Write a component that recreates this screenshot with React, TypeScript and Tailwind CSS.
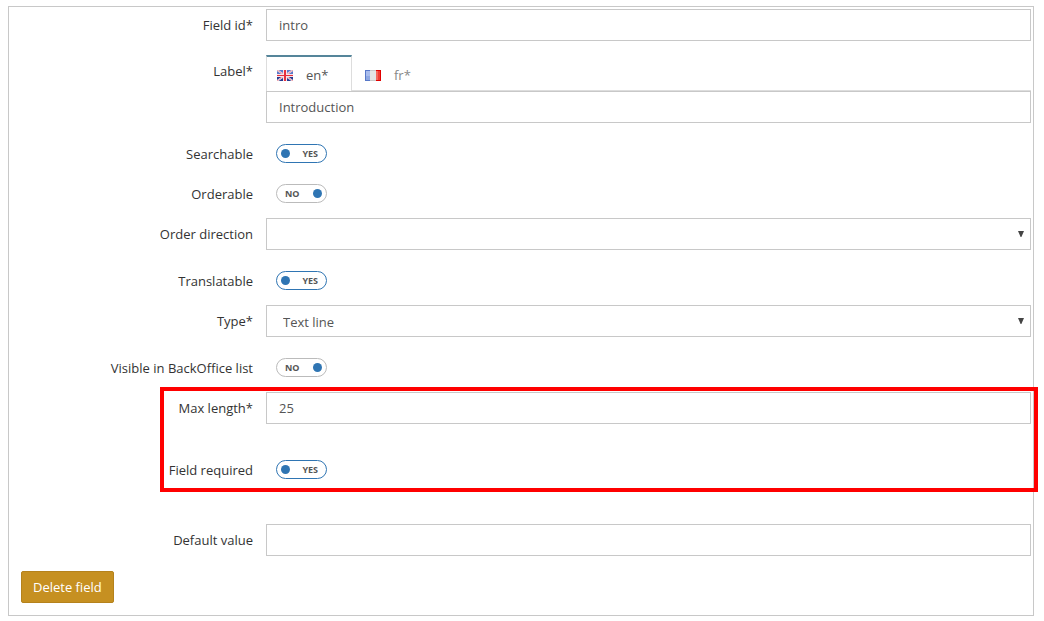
import { useState } from "react";
import type { ReactNode } from "react";

const box =
  "block h-8 w-full rounded-none border border-[#c8c8c8] bg-white px-3 text-[13px] text-[#555] outline-none focus:border-[#2f75b3]";

function Row({ label, id, children }: { label: string; id: string; children: ReactNode }) {
  return (
    <div className="flex items-start">
      <label htmlFor={id} className="w-[244px] shrink-0 text-right leading-8">
        {label}
      </label>
      <div className="ml-[13px] min-w-0 flex-1">{children}</div>
    </div>
  );
}

function TextRow({ label, id, value }: { label: string; id: string; value: string }) {
  return (
    <Row label={label} id={id}>
      <input id={id} type="text" defaultValue={value} className={box} />
    </Row>
  );
}

function SelectRow({ label, id, options }: { label: string; id: string; options: string[] }) {
  return (
    <Row label={label} id={id}>
      <div className="relative">
        <select id={id} className={box + " appearance-none pt-[3px] pl-4"}>
          {options.map((o) => (
            <option key={o}>{o}</option>
          ))}
        </select>
        <svg
          viewBox="0 0 6 6"
          className="pointer-events-none absolute top-[13px] right-[7px] size-[6px]"
          aria-hidden="true"
        >
          <path d="M0 0h6L3.4 6h-.8z" fill="#444" />
        </svg>
      </div>
    </Row>
  );
}

function ToggleRow({ label, id, on }: { label: string; id: string; on: boolean }) {
  const [checked, setChecked] = useState(on);
  const dot = <span className="size-[9px] rounded-full bg-[#2f75b3]" />;
  return (
    <Row label={label} id={id}>
      <div className="flex h-8 items-center pb-px pl-[10px]">
        <label
          className={
            "relative flex h-[19px] w-[51px] cursor-pointer items-center justify-between rounded-full border text-[9px] font-bold text-[#555] " +
            (checked ? "border-[#2f75b3] pr-2 pl-1" : "border-[#bbb] pr-1 pl-2")
          }
        >
          <input
            id={id}
            type="checkbox"
            checked={checked}
            onChange={(e) => setChecked(e.target.checked)}
            className="sr-only"
          />
          {checked ? dot : null}
          <span>{checked ? "YES" : "NO"}</span>
          {checked ? null : dot}
        </label>
      </div>
    </Row>
  );
}

function FlagEn() {
  return (
    <svg viewBox="0 0 16 11" className="h-[11px] w-4" aria-hidden="true">
      <path d="M0 0h16v5H0z" fill="#5c78c8" />
      <path d="M0 5h16v6H0z" fill="#27398f" />
      <path d="M0 0l16 11M16 0L0 11" stroke="#f4f0f6" strokeWidth="1.8" />
      <path d="M0 0l16 11M16 0L0 11" stroke="#ec7880" strokeWidth="0.7" />
      <path d="M6 0h4v11H6zM0 4h16v3H0z" fill="#f6e4ea" />
      <path d="M7 0h2v11H7zM0 5h16v1H0z" fill="#e8303c" />
    </svg>
  );
}

function FlagFr() {
  return (
    <svg viewBox="0 0 16 11" className="h-[11px] w-4" aria-hidden="true">
      <rect width="16" height="11" fill="#e4e4e4" />
      <path d="M0 0h5v11H0z" fill="#a9bcec" />
      <path d="M1 6h4v4H1z" fill="#8fa8e2" />
      <path d="M11 0h5v11h-5z" fill="#f03c32" />
      <path d="M11 1h2v9h-2z" fill="#f4685c" />
      <path d="M.5 .5H5M.5 0v11M0 10.5h5" stroke="#5878c8" fill="none" />
      <path d="M5 .5h6M5 10.5h6" stroke="#c8c8c8" />
      <path d="M11 .5h5M15.5 0v11M11 10.5h5" stroke="#e00000" fill="none" />
    </svg>
  );
}

function LabelRow() {
  const [lang, setLang] = useState("en");
  const [texts, setTexts] = useState<Record<string, string>>({ en: "Introduction", fr: "" });
  const tabs = [
    { code: "en", flag: <FlagEn /> },
    { code: "fr", flag: <FlagFr /> },
  ];
  return (
    <Row label="Label*" id="label">
      <div role="tablist" className="flex h-9 gap-[2px] border-b border-[#ddd]">
        {tabs.map((t) => (
          <button
            key={t.code}
            type="button"
            role="tab"
            aria-selected={lang === t.code}
            onClick={() => setLang(t.code)}
            className={
              "flex h-9 w-[86px] items-center gap-[13px] border-x border-t-2 pt-[3px] pl-[10px] " +
              (lang === t.code
                ? "border-x-[#ddd] border-t-[#55859a] bg-white text-[#555]"
                : "border-transparent text-[#888]")
            }
          >
            {t.flag}
            {t.code}*
          </button>
        ))}
      </div>
      <input
        id="label"
        type="text"
        value={texts[lang]}
        onChange={(e) => setTexts({ ...texts, [lang]: e.target.value })}
        className={box}
      />
    </Row>
  );
}

export default function App() {
  return (
    <div className="bg-white pt-[6px] pr-[10px] pb-[5px] pl-2 font-['Open_Sans','Noto_Sans',sans-serif] text-[13px] text-[#333]">
      <form
        className="border border-[#c8c8c8] pt-[2px] pr-[2px] pb-3"
        onSubmit={(e) => e.preventDefault()}
      >
        <div className="flex flex-col gap-[15px]">
          <div className="flex flex-col gap-[14px]">
            <TextRow label="Field id*" id="field-id" value="intro" />
            <LabelRow />
          </div>
          <div className="flex flex-col gap-2">
            <ToggleRow label="Searchable" id="searchable" on />
            <ToggleRow label="Orderable" id="orderable" on={false} />
            <SelectRow label="Order direction" id="order-direction" options={[""]} />
          </div>
          <div className="flex flex-col gap-2">
            <ToggleRow label="Translatable" id="translatable" on />
            <SelectRow label="Type*" id="type" options={["Text line"]} />
          </div>
          <div className="flex flex-col gap-2">
            <ToggleRow label="Visible in BackOffice list" id="visible" on={false} />
            <div className="relative flex flex-col gap-[30px]">
              <TextRow label="Max length*" id="max-length" value="25" />
              <ToggleRow label="Field required" id="required" on />
              <div className="pointer-events-none absolute -top-[5px] -right-[7px] -bottom-[6px] left-[151px] border-4 border-[#f00]" />
            </div>
          </div>
        </div>
        <div className="mt-[38px]">
          <TextRow label="Default value" id="default-value" value="" />
        </div>
        <button
          type="button"
          className="mt-[15px] ml-3 block h-8 cursor-pointer rounded-[2px] border border-[#b5821c] bg-[#c69021] px-[11px] pt-[2px] text-white"
        >
          Delete field
        </button>
      </form>
    </div>
  );
}
